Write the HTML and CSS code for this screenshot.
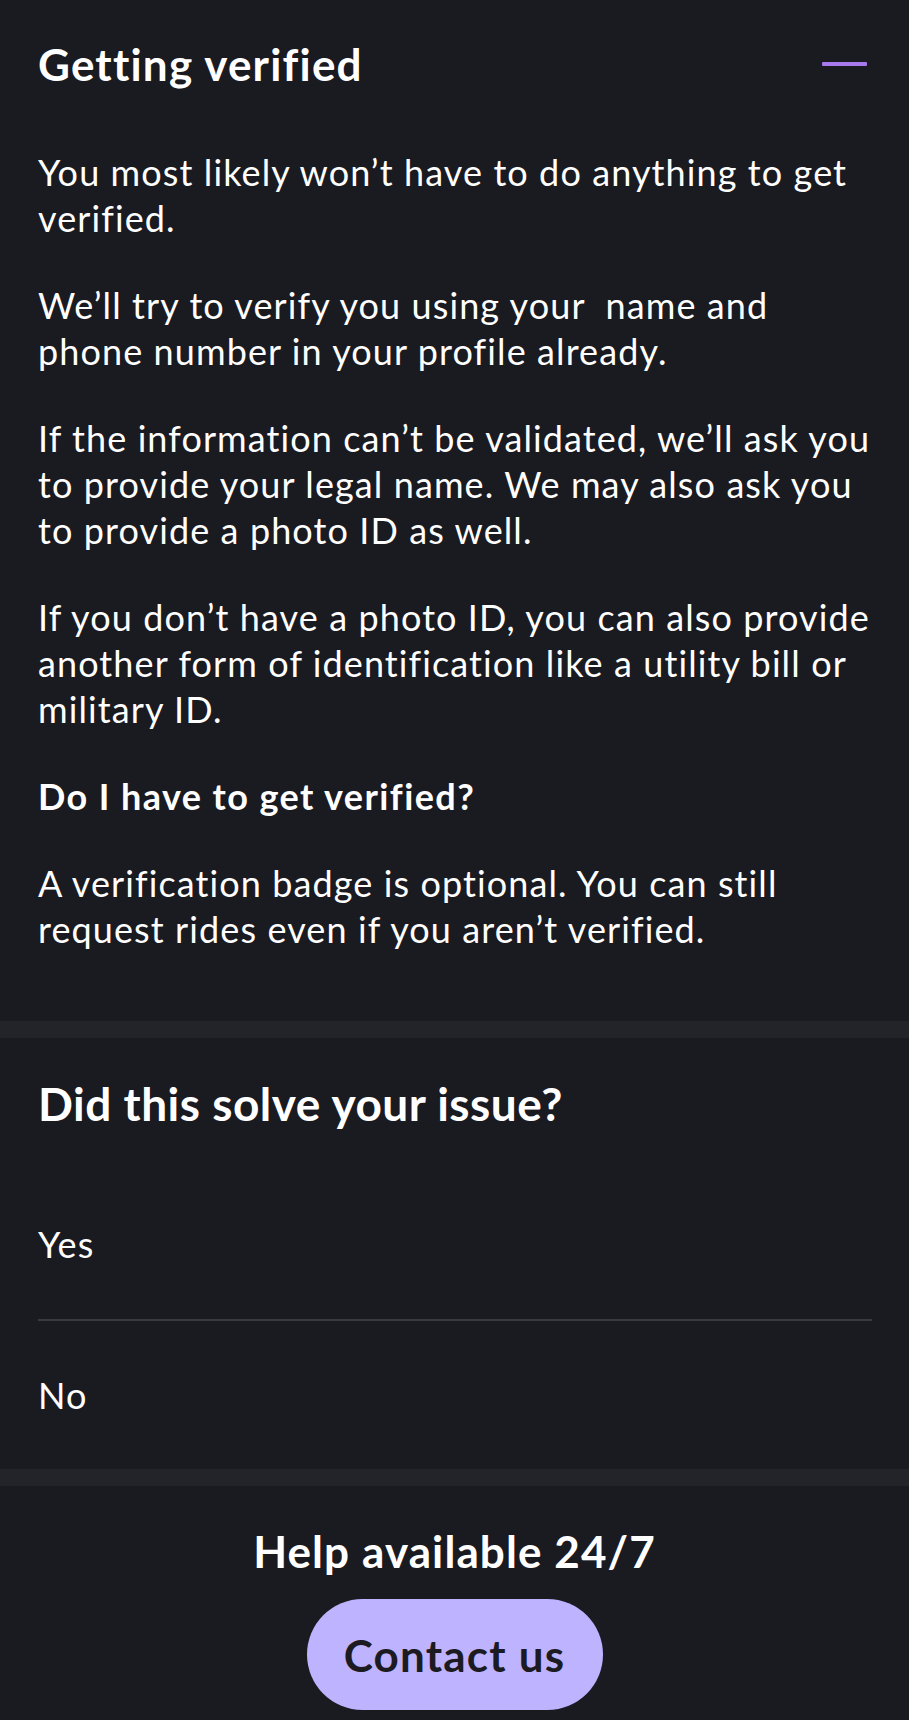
FILE: index.html
```html
<!DOCTYPE html>
<html lang="en">
<head>
<meta charset="utf-8">
<title>Getting verified</title>
<link rel="stylesheet" href="styles.css">
</head>
<body>
<main class="page">
  <section class="article">
    <div class="article-head">
      <h1 class="article-title">Getting verified</h1>
      <span class="collapse-icon" aria-label="Collapse"></span>
    </div>
    <p class="para">You most likely won’t have to do anything to get verified.</p>
    <p class="para">We’ll try to verify you using your&nbsp; name and phone number in your profile already.</p>
    <p class="para">If the information can’t be validated, we’ll ask you to provide your legal name. We may also ask you to provide a photo ID as well.</p>
    <p class="para">If you don’t have a photo ID, you can also provide another form of identification like a utility bill or military ID.</p>
    <h2 class="subhead">Do I have to get verified?</h2>
    <p class="para">A verification badge is optional. You can still request rides even if you aren’t verified.</p>
  </section>
  <div class="band"></div>
  <section class="feedback">
    <h2 class="feedback-title">Did this solve your issue?</h2>
    <ul class="options">
      <li class="option">Yes</li>
      <li class="option">No</li>
    </ul>
  </section>
  <div class="band"></div>
  <section class="help">
    <h2 class="help-title">Help available 24/7</h2>
    <button class="contact-btn" type="button">Contact us</button>
  </section>
</main>
</body>
</html>
```
FILE: styles.css
```css
* { box-sizing: border-box; }
html, body {
  margin: 0;
  padding: 0;
  background: #1a1a21;
}
body {
  font-family: "Lato", "Open Sans", sans-serif;
  color: #ffffff;
  font-variant-ligatures: none;
}
.page {
  display: flex;
  flex-direction: column;
  min-height: 1720px;
}
.article {
  padding: 36px 37px 69px 38px;
}
.article-head {
  display: flex;
  align-items: center;
  justify-content: space-between;
  margin-bottom: 57px;
}
.article-title {
  margin: 0;
  font-size: 44px;
  line-height: 56px;
  font-weight: 700;
  letter-spacing: 1.2px;
}
.collapse-icon {
  display: block;
  width: 45px;
  height: 4px;
  margin-right: 5px;
  background: #a779ec;
  border-radius: 1px;
}
.para {
  margin: 0 0 41px;
  font-size: 36px;
  line-height: 46px;
  font-weight: 400;
  letter-spacing: 1.1px;
}
.para:last-child { margin-bottom: 0; }
.subhead {
  margin: 0 0 41px;
  font-size: 36px;
  line-height: 46px;
  font-weight: 700;
  letter-spacing: 1.4px;
}
.band {
  height: 17px;
  background: #232429;
}
.feedback {
  padding: 38px 37px 0 38px;
}
.feedback-title {
  margin: 0 0 37px;
  font-size: 46px;
  line-height: 56px;
  font-weight: 700;
  letter-spacing: 0.5px;
}
.options {
  list-style: none;
  margin: 0;
  padding: 0;
}
.option {
  height: 150px;
  display: flex;
  align-items: center;
  font-size: 36px;
  line-height: 46px;
  letter-spacing: 1.1px;
}
.option + .option {
  border-top: 2px solid #3a3b41;
}
.help {
  flex: 1;
  display: flex;
  flex-direction: column;
  align-items: center;
  padding-top: 37px;
}
.help-title {
  margin: 0 0 20px;
  font-size: 44px;
  line-height: 56px;
  font-weight: 700;
  letter-spacing: 1.1px;
}
.contact-btn {
  width: 296px;
  height: 111px;
  border: none;
  border-radius: 56px;
  background: #bdb3fe;
  color: #1c1b22;
  font-family: "Lato", "Open Sans", sans-serif;
  font-size: 44px;
  font-weight: 700;
  letter-spacing: 1.2px;
  padding: 0;
  cursor: pointer;
}
```
